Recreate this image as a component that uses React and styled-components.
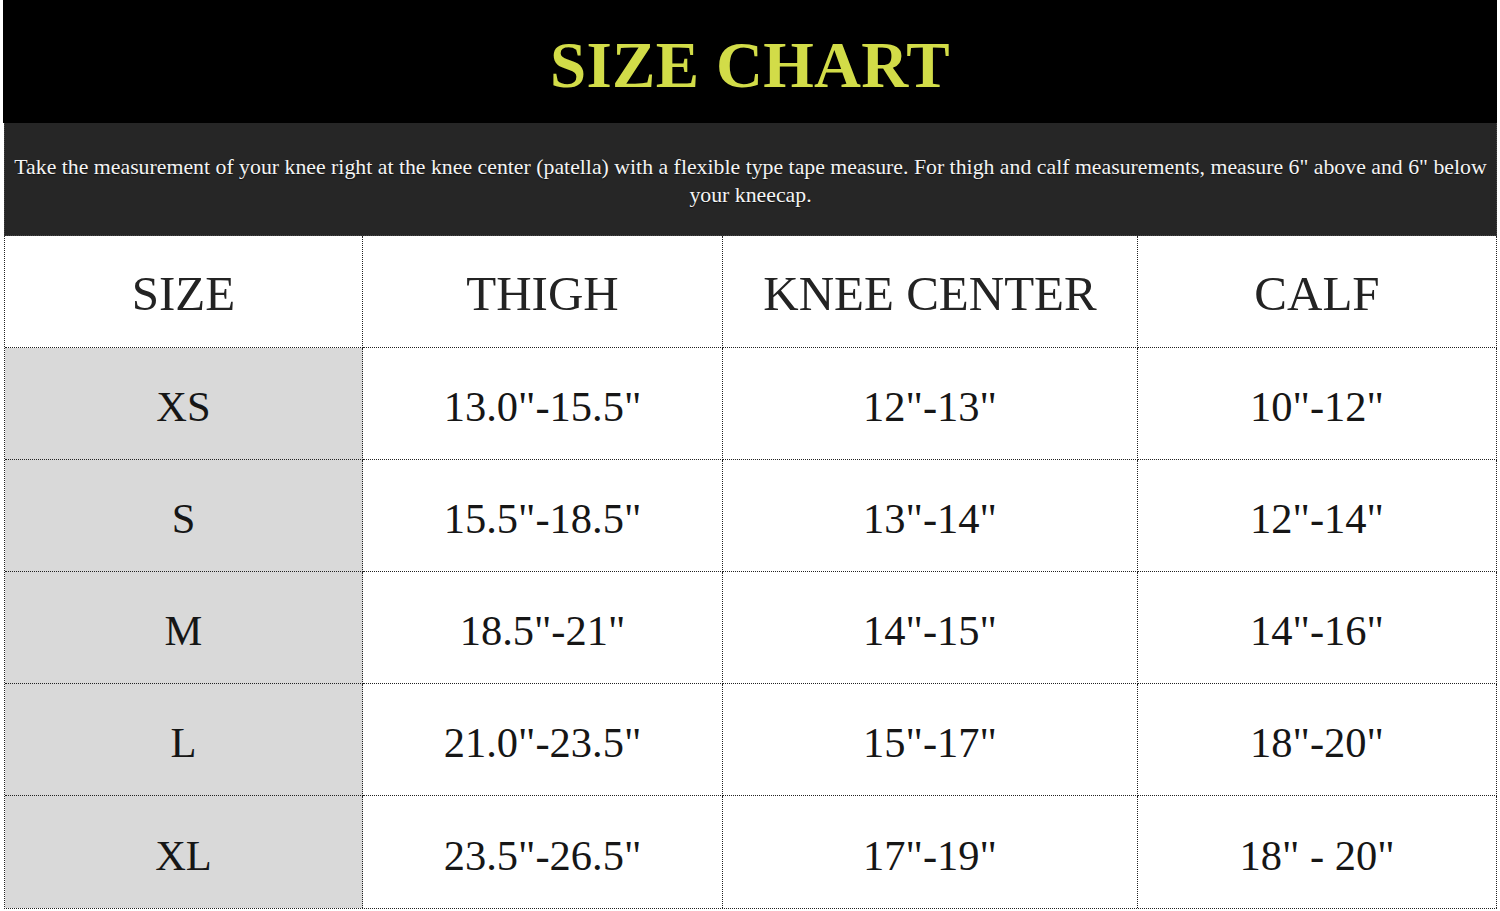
import React from 'react';
import styled, { createGlobalStyle } from 'styled-components';

const GlobalStyle = createGlobalStyle`
  html, body {
    margin: 0;
    padding: 0;
    background: #ffffff;
  }
`;

const rows = [
  ['XS', '13.0"-15.5"', '12"-13"', '10"-12"'],
  ['S', '15.5"-18.5"', '13"-14"', '12"-14"'],
  ['M', '18.5"-21"', '14"-15"', '14"-16"'],
  ['L', '21.0"-23.5"', '15"-17"', '18"-20"'],
  ['XL', '23.5"-26.5"', '17"-19"', '18" - 20"'],
];

const App = () => (
  <Page>
    <GlobalStyle />
    <TitleBar>
      <Title>SIZE CHART</Title>
    </TitleBar>
    <Note>
      Take the measurement of your knee right at the knee center (patella) with a flexible type tape
      measure. For thigh and calf measurements, measure 6" above and 6" below your kneecap.
    </Note>
    <Table>
      <HeadCell>SIZE</HeadCell>
      <HeadCell>THIGH</HeadCell>
      <HeadCell>KNEE CENTER</HeadCell>
      <HeadCell>CALF</HeadCell>
      {rows.map((row) =>
        row.map((value, i) => (
          <Cell key={row[0] + i} $size={i === 0}>
            {value}
          </Cell>
        ))
      )}
    </Table>
  </Page>
);

const Page = styled.div`
  width: 1493px;
  margin: 0 3px 0 4px;
  font-family: 'Liberation Serif', 'Times New Roman', serif;
`;

const TitleBar = styled.header`
  background: #000;
  height: 123px;
  margin-left: -1px;
  display: flex;
  align-items: center;
  justify-content: center;
`;

const Title = styled.h1`
  margin: 8px 0 0;
  font-size: 65px;
  font-weight: bold;
  color: #d2dc48;
  letter-spacing: 0.3px;
`;

const Note = styled.p`
  margin: 0;
  box-sizing: border-box;
  height: 113px;
  padding: 30px 5px 0;
  background: #262626;
  border: 1px dotted #444;
  border-top: none;
  color: #f4f4f4;
  font-size: 21.8px;
  line-height: 28px;
  text-align: center;
  text-shadow: 0 1px 1px rgba(0, 0, 0, 0.6);
`;

const Table = styled.div`
  display: grid;
  grid-template-columns: 358px 360px 415px 1fr;
  grid-auto-rows: 112px;
  border-left: 1px dotted #222;
  border-bottom: 1px dotted #222;
`;

const HeadCell = styled.div`
  display: flex;
  align-items: center;
  justify-content: center;
  padding-top: 4px;
  border-right: 1px dotted #222;
  border-bottom: 1px dotted #222;
  color: #232323;
  font-size: 49px;
`;

const Cell = styled.div`
  display: flex;
  align-items: center;
  justify-content: center;
  padding-top: 6px;
  background: ${(p) => (p.$size ? '#d9d9d9' : '#ffffff')};
  border-right: 1px dotted #222;
  border-bottom: 1px dotted #222;
  color: #161616;
  font-size: 42.5px;
  &:nth-last-child(-n + 4) {
    border-bottom: none;
  }
`;

export default App;
